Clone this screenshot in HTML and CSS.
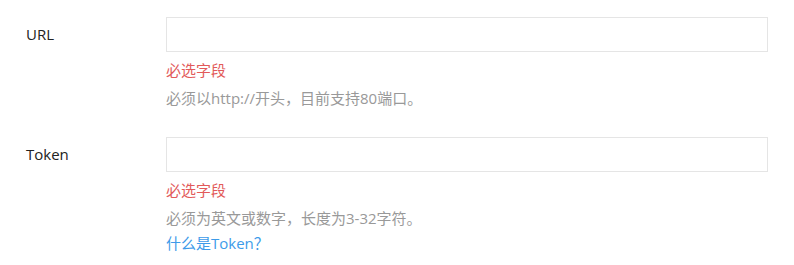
FILE: index.html
```html
<!DOCTYPE html>
<html>
<head>
<meta charset="utf-8">
<link rel="stylesheet" href="styles.css">
</head>
<body>
<form class="form">
  <div class="row">
    <label class="label">URL</label>
    <div class="field">
      <input class="input" type="text">
      <div class="error">必选字段</div>
      <div class="help">必须以http://开头，目前支持80端口。</div>
    </div>
  </div>
  <div class="row">
    <label class="label">Token</label>
    <div class="field">
      <input class="input" type="text">
      <div class="error">必选字段</div>
      <div class="help">必须为英文或数字，长度为3-32字符。</div>
      <a class="link" href="#">什么是Token？</a>
    </div>
  </div>
</form>
</body>
</html>
```

FILE: styles.css
```css
html, body {
  margin: 0;
  padding: 0;
  background: #fff;
}
body {
  font-family: "Open Sans", "Noto Sans CJK SC", sans-serif;
  font-size: 15px;
  color: #333;
}
.form {
  padding: 17px 0 0 26px;
  display: flex;
  flex-direction: column;
  gap: 26px;
}
.row {
  display: flex;
}
.label {
  width: 140px;
  flex: none;
  line-height: 35px;
  color: #222;
}
.field {
  width: 602px;
  display: flex;
  flex-direction: column;
}
.input {
  box-sizing: border-box;
  width: 602px;
  height: 35px;
  border: 1px solid #e5e5e5;
  margin: 0;
  padding: 0 8px;
  outline: none;
}
.error {
  margin-top: 8px;
  line-height: 20px;
  color: #e25a5a;
}
.help {
  margin-top: 6px;
  line-height: 25px;
  color: #999;
}
.link {
  line-height: 24px;
  color: #3d9be9;
  text-decoration: none;
}
```
